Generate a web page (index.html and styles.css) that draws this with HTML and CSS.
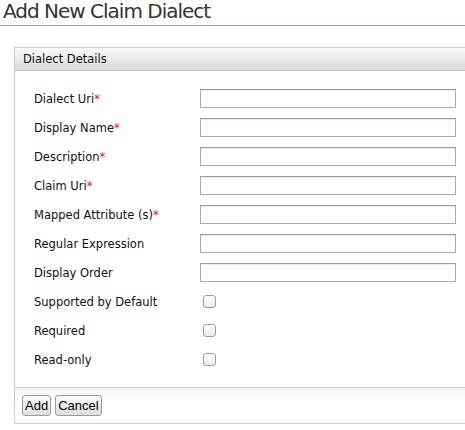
FILE: index.html
```html
<!DOCTYPE html>
<html>
<head>
<meta charset="utf-8">
<link rel="stylesheet" href="styles.css">
</head>
<body>
<h2 class="page-title">Add New Claim Dialect</h2>
<div class="panel">
  <div class="panel-head">Dialect Details</div>
  <div class="panel-body">
    <div class="row"><label class="lbl">Dialect Uri<span class="req">*</span></label><input class="txt" type="text"></div>
    <div class="row"><label class="lbl">Display Name<span class="req">*</span></label><input class="txt" type="text"></div>
    <div class="row"><label class="lbl">Description<span class="req">*</span></label><input class="txt" type="text"></div>
    <div class="row"><label class="lbl">Claim Uri<span class="req">*</span></label><input class="txt" type="text"></div>
    <div class="row"><label class="lbl">Mapped Attribute (s)<span class="req">*</span></label><input class="txt" type="text"></div>
    <div class="row"><label class="lbl">Regular Expression</label><input class="txt" type="text"></div>
    <div class="row"><label class="lbl">Display Order</label><input class="txt" type="text"></div>
    <div class="row"><label class="lbl">Supported by Default</label><span class="chk"></span></div>
    <div class="row"><label class="lbl">Required</label><span class="chk"></span></div>
    <div class="row"><label class="lbl">Read-only</label><span class="chk"></span></div>
  </div>
  <div class="panel-foot">
    <button class="btn" type="button">Add</button>
    <button class="btn" type="button">Cancel</button>
  </div>
</div>
</body>
</html>
```
FILE: styles.css
```css
html, body {
  margin: 0;
  padding: 0;
  background: #fff;
}
body {
  font-family: "DejaVu Sans", Verdana, sans-serif;
  color: #111;
  overflow: hidden;
}
.page-title {
  margin: 0;
  padding: 0 0 0 3px;
  height: 25px;
  line-height: 22px;
  font-size: 20px;
  letter-spacing: -1px;
  font-weight: normal;
  color: #333;
  border-bottom: 1px solid #8ea6c2;
  white-space: nowrap;
}
.panel {
  margin: 21px 0 0 14px;
  border: 1px solid #cccccc;
  border-right: 0;
}
.panel-head {
  height: 22px;
  line-height: 22px;
  padding-left: 8px;
  font-size: 11.5px;
  color: #111;
  background: linear-gradient(#f9f9f9, #dcdcdc);
  border-bottom: 1px solid #c8c8c8;
}
.panel-body {
  padding: 13px 0 13px 19px;
}
.row {
  display: flex;
  align-items: center;
  height: 29px;
}
.lbl {
  width: 166px;
  flex: none;
  font-size: 11.5px;
  color: #111;
  white-space: nowrap;
}
.req {
  color: #e0102a;
}
.txt {
  box-sizing: border-box;
  width: 256px;
  height: 19px;
  margin: 0;
  padding: 0;
  border: 1px solid #a9a9a9;
  border-top-color: #9a9a9a;
  box-shadow: inset 0 1px 1px rgba(0,0,0,0.08);
  background: #fff;
}
.chk {
  box-sizing: border-box;
  display: block;
  width: 13px;
  height: 13px;
  margin-left: 3px;
  border: 1px solid #9b9b9b;
  border-radius: 3px;
  background: linear-gradient(#ffffff, #ececec);
}
.panel-foot {
  border-top: 1px solid #cccccc;
  padding: 7px 0 7px 7px;
  display: flex;
  gap: 4px;
  background: linear-gradient(#f4f4f4, #ffffff 40%);
}
.btn {
  font-family: "Liberation Sans", Arial, sans-serif;
  font-size: 13px;
  height: 21px;
  padding: 0 2px;
  margin: 0;
  color: #000;
  border: 1px solid #9a9a9a;
  border-radius: 3px;
  background: linear-gradient(#fbfbfb, #dedede);
}
```
